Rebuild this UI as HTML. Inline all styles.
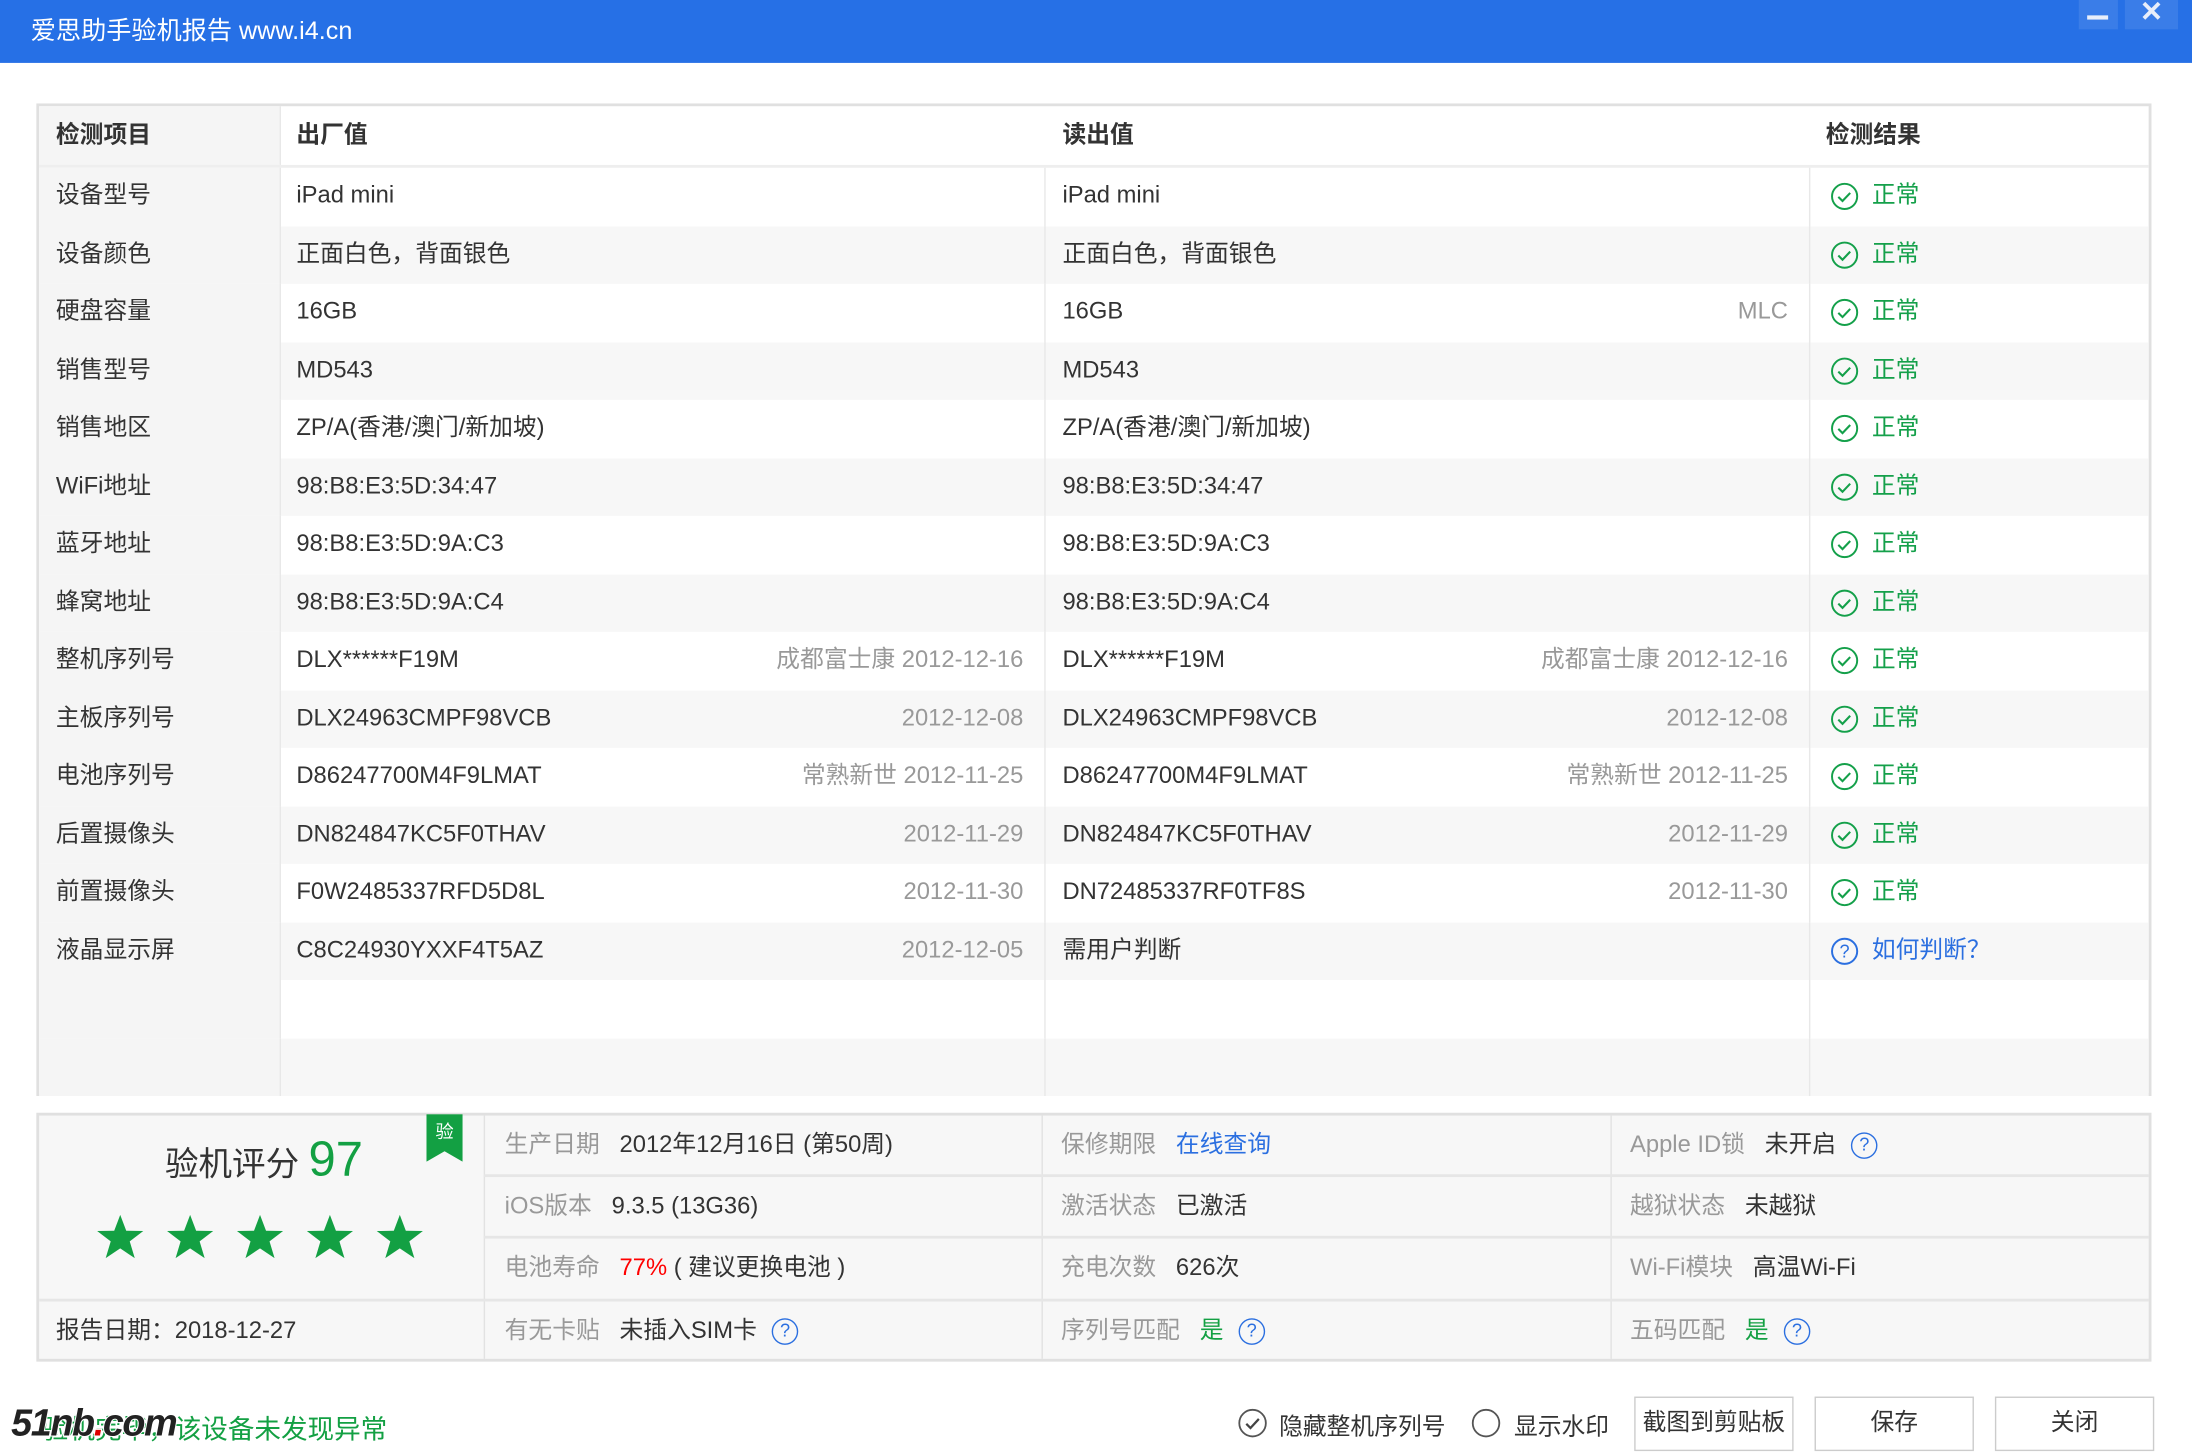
<!DOCTYPE html>
<html><head><meta charset="utf-8"><style>
*{margin:0;padding:0;box-sizing:border-box}
html,body{width:2192px;height:1454px;overflow:hidden;background:#fff}
#w{position:absolute;left:0;top:0;width:1568px;height:1040px;transform:scale(1.39796);transform-origin:0 0;font-family:"Liberation Sans","Noto Sans CJK SC",sans-serif;color:#333;font-size:17px}
.a{position:absolute;white-space:nowrap}
.hd{left:0;top:0;width:1568px;height:45px;background:#2670e6}
.tb{left:26px;top:74px;width:1513px;height:710px;border:2px solid #e0e0e0;background:#fff}
.row{position:absolute;left:0;width:1509px;height:41.5px}
.g{background:#f7f7f7}
.c1{position:absolute;left:0;top:0;width:172px;height:100%;background:#f5f5f5}
.vl{position:absolute;width:1px;background:#e8e8e8}
.t{position:absolute;line-height:40px;font-size:17px}
.d{color:#999}
.ok{color:#14a04a}
.bp{left:26px;top:796px;width:1513px;height:178px;border:2px solid #e0e0e0;background:#f7f7f7}
.lb{color:#999}
.q{display:inline-block;width:19px;height:19px;border:1.5px solid #2b6fe0;border-radius:50%;color:#2b6fe0;font-size:13px;line-height:16px;text-align:center;vertical-align:middle;margin-left:6px}
.btn{top:999px;height:39px;border:1.5px solid #ccc;background:#fff;text-align:center;line-height:36px;font-size:17px}
</style></head><body><div id="w">
<div class="a hd"></div>
<div class="a" style="left:22px;top:8px;color:#fff;font-size:18px">爱思助手验机报告 www.i4.cn</div>
<div class="a" style="left:1487px;top:0;width:28px;height:21px;background:#3a7de8"></div>
<div class="a" style="left:1493px;top:11px;width:15px;height:3px;background:#e8eefa"></div>
<div class="a" style="left:1520px;top:0;width:38px;height:21px;background:#3a7de8;color:#e8eefa;font-size:20px;text-align:center;line-height:19px;font-weight:bold">✕</div>

<div class="a tb">
<div class="c1" style="height:42px"></div>
<div class="vl" style="left:172px;top:0;height:42px"></div>
<div class="t" style="left:12px;top:0;line-height:42px;font-weight:bold">检测项目</div>
<div class="t" style="left:184px;top:0;line-height:42px;font-weight:bold">出厂值</div>
<div class="t" style="left:732px;top:0;line-height:42px;font-weight:bold">读出值</div>
<div class="t" style="left:1278px;top:0;line-height:42px;font-weight:bold">检测结果</div>
<div class="a" style="left:0;top:42px;width:1509px;height:2px;background:#eee"></div>
<div id="rows"></div>
</div>

<div class="a bp">
<div class="vl" style="left:318px;top:0;height:174px;background:#e2e2e2"></div>
<div class="vl" style="left:717px;top:0;height:174px;background:#e2e2e2"></div>
<div class="vl" style="left:1124px;top:0;height:174px;background:#e2e2e2"></div>
<div class="a" style="left:318px;top:42px;width:1191px;height:2px;background:#e6e6e6"></div>
<div class="a" style="left:318px;top:86px;width:1191px;height:2px;background:#e6e6e6"></div>
<div class="a" style="left:0;top:131px;width:1509px;height:2px;background:#e6e6e6"></div>
</div>
<div class="a" style="left:305px;top:797px;width:26px;height:34px;background:#13a043;clip-path:polygon(0 0,100% 0,100% 100%,50% 78%,0 100%);color:#fff;font-size:13px;text-align:center;line-height:26px">验</div>
<div class="a" style="left:118px;top:810px;font-size:24px">验机评分 <span style="color:#13a043;font-size:35px">97</span></div>
<svg class="a" style="left:68px;top:868px" width="240" height="36" viewBox="0 0 240 36">
<g fill="#13a043">
<polygon id="s" points="18,1 22.3,12.4 34.5,12.6 24.8,20 28.4,32 18,25 7.6,32 11.2,20 1.5,12.6 13.7,12.4"/>
<use href="#s" x="50"/><use href="#s" x="100"/><use href="#s" x="150"/><use href="#s" x="200"/>
</g></svg>
<div class="a" style="left:40px;top:937px">报告日期：2018-12-27</div>

<div class="a" style="left:361px;top:804px"><span class="lb">生产日期</span>&nbsp;&nbsp; 2012年12月16日 (第50周)</div>
<div class="a" style="left:361px;top:848px"><span class="lb">iOS版本</span>&nbsp;&nbsp; 9.3.5 (13G36)</div>
<div class="a" style="left:361px;top:892px"><span class="lb">电池寿命</span>&nbsp;&nbsp; <span style="color:#f00">77%</span> ( 建议更换电池 )</div>
<div class="a" style="left:361px;top:937px"><span class="lb">有无卡贴</span>&nbsp;&nbsp; 未插入SIM卡 <span class="q">?</span></div>
<div class="a" style="left:759px;top:804px"><span class="lb">保修期限</span>&nbsp;&nbsp; <span style="color:#2b6fe0">在线查询</span></div>
<div class="a" style="left:759px;top:848px"><span class="lb">激活状态</span>&nbsp;&nbsp; 已激活</div>
<div class="a" style="left:759px;top:892px"><span class="lb">充电次数</span>&nbsp;&nbsp; 626次</div>
<div class="a" style="left:759px;top:937px"><span class="lb">序列号匹配</span>&nbsp;&nbsp; <span style="color:#13a043">是</span> <span class="q">?</span></div>
<div class="a" style="left:1166px;top:804px"><span class="lb">Apple ID锁</span>&nbsp;&nbsp; 未开启 <span class="q">?</span></div>
<div class="a" style="left:1166px;top:848px"><span class="lb">越狱状态</span>&nbsp;&nbsp; 未越狱</div>
<div class="a" style="left:1166px;top:892px"><span class="lb">Wi-Fi模块</span>&nbsp;&nbsp; 高温Wi-Fi</div>
<div class="a" style="left:1166px;top:937px"><span class="lb">五码匹配</span>&nbsp;&nbsp; <span style="color:#13a043">是</span> <span class="q">?</span></div>

<div class="a" style="left:30px;top:1008px;color:#13a043;font-size:19px">验机完毕，该设备未发现异常</div>
<div class="a" style="left:8px;top:1003px;font-size:27px;font-weight:900;font-style:italic;color:#222;-webkit-text-stroke:1.5px #fff;paint-order:stroke fill;letter-spacing:-1px">51nb<span style="color:#d00">.</span>com</div>

<svg class="a" style="left:885px;top:1007px" width="22" height="22"><circle cx="11" cy="11" r="9.5" fill="none" stroke="#555" stroke-width="1.3"/><path d="M6.5 11.5l3 3 6-6.5" fill="none" stroke="#444" stroke-width="1.6"/></svg>
<div class="a" style="left:915px;top:1006px">隐藏整机序列号</div>
<svg class="a" style="left:1052px;top:1007px" width="22" height="22"><circle cx="11" cy="11" r="9.5" fill="none" stroke="#555" stroke-width="1.3"/></svg>
<div class="a" style="left:1083px;top:1006px">显示水印</div>
<div class="a btn" style="left:1169px;width:114px">截图到剪贴板</div>
<div class="a btn" style="left:1298px;width:114px">保存</div>
<div class="a btn" style="left:1427px;width:114px">关闭</div>
</div>
<script>
var R=[["设备型号","iPad mini","","iPad mini","",0],
["设备颜色","正面白色，背面银色","","正面白色，背面银色","",0],
["硬盘容量","16GB","","16GB","MLC",0],
["销售型号","MD543","","MD543","",0],
["销售地区","ZP/A(香港/澳门/新加坡)","","ZP/A(香港/澳门/新加坡)","",0],
["WiFi地址","98:B8:E3:5D:34:47","","98:B8:E3:5D:34:47","",0],
["蓝牙地址","98:B8:E3:5D:9A:C3","","98:B8:E3:5D:9A:C3","",0],
["蜂窝地址","98:B8:E3:5D:9A:C4","","98:B8:E3:5D:9A:C4","",0],
["整机序列号","DLX******F19M","成都富士康 2012-12-16","DLX******F19M","成都富士康 2012-12-16",0],
["主板序列号","DLX24963CMPF98VCB","2012-12-08","DLX24963CMPF98VCB","2012-12-08",0],
["电池序列号","D86247700M4F9LMAT","常熟新世 2012-11-25","D86247700M4F9LMAT","常熟新世 2012-11-25",0],
["后置摄像头","DN824847KC5F0THAV","2012-11-29","DN824847KC5F0THAV","2012-11-29",0],
["前置摄像头","F0W2485337RFD5D8L","2012-11-30","DN72485337RF0TF8S","2012-11-30",0],
["液晶显示屏","C8C24930YXXF4T5AZ","2012-12-05","需用户判断","",1],
["","","","","",2],["","","","","",2]];
var h="";
R.forEach(function(r,i){
var top=44+i*41.5;
h+='<div class="row'+(i%2?' g':'')+'" style="top:'+top+'px"><div class="c1"></div>';
h+='<div class="vl" style="left:172px;top:0;height:41.5px"></div><div class="vl" style="left:719px;top:0;height:41.5px"></div><div class="vl" style="left:1266px;top:0;height:41.5px"></div>';
h+='<div class="t" style="left:12px">'+r[0]+'</div><div class="t" style="left:184px">'+r[1]+'</div>';
h+='<div class="t d" style="right:805px">'+r[2]+'</div><div class="t" style="left:732px">'+r[3]+'</div><div class="t d" style="right:258px">'+r[4]+'</div>';
if(r[5]==0)h+='<svg class="a" style="left:1281px;top:10px" width="21" height="21"><circle cx="10.5" cy="10.5" r="9" fill="none" stroke="#14a04a" stroke-width="1.4"/><path d="M6 10.8l3 3 5.5-5.8" fill="none" stroke="#14a04a" stroke-width="1.5"/></svg><div class="t ok" style="left:1311px">正常</div>';
if(r[5]==1)h+='<svg class="a" style="left:1281px;top:10px" width="21" height="21"><circle cx="10.5" cy="10.5" r="9" fill="none" stroke="#2b6fe0" stroke-width="1.4"/><text x="10.5" y="15" font-size="13" text-anchor="middle" fill="#2b6fe0" font-family="Liberation Sans">?</text></svg><div class="t" style="left:1311px;color:#2b6fe0">如何判断？</div>';
h+='</div>';});
document.getElementById("rows").innerHTML=h;
</script>
</body></html>
